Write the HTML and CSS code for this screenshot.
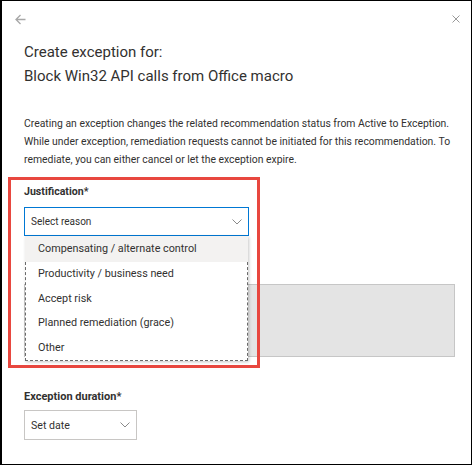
FILE: index.html
```html
<!DOCTYPE html>
<html>
<head>
<meta charset="utf-8">
<link rel="stylesheet" href="styles.css">
</head>
<body>
<div class="window">
  <div class="topbar">
    <svg class="icon-back" width="11" height="11" viewBox="0 0 11 11"><path d="M10.5 5.5H1.2M5.5 1L1 5.5L5.5 10" fill="none" stroke="#a8a8a8" stroke-width="1.3"/></svg>
    <svg class="icon-close" width="8" height="8" viewBox="0 0 8 8"><path d="M0.5 0.5L7.5 7.5M7.5 0.5L0.5 7.5" fill="none" stroke="#9a9a9a" stroke-width="1"/></svg>
  </div>
  <h1 class="title">Create exception for:<br>Block Win32 API calls from Office macro</h1>
  <p class="desc">Creating an exception changes the related recommendation status from Active to Exception.<br>While under exception, remediation requests cannot be initiated for this recommendation. To<br>remediate, you can either cancel or let the exception expire.</p>

  <div class="field">
    <div class="label">Justification*</div>
    <div class="select select-active">
      <span>Select reason</span>
      <svg class="chev" width="10" height="6" viewBox="0 0 10 6"><path d="M0.5 0.5L5 5L9.5 0.5" fill="none" stroke="#8a8a8a" stroke-width="1"/></svg>
    </div>
  </div>

  <div class="textarea"></div>

  <div class="field field-duration">
    <div class="label label-duration">Exception duration*</div>
    <div class="select select-small">
      <span>Set date</span>
      <svg class="chev" width="10" height="6" viewBox="0 0 10 6"><path d="M0.5 0.5L5 5L9.5 0.5" fill="none" stroke="#8a8a8a" stroke-width="1"/></svg>
    </div>
  </div>

  <div class="dropdown">
    <div class="item item-hover">Compensating / alternate control</div>
    <div class="rest">
      <div class="item">Productivity / business need</div>
      <div class="item">Accept risk</div>
      <div class="item">Planned remediation (grace)</div>
      <div class="item">Other</div>
    </div>
  </div>

  <div class="highlight"></div>
</div>
</body>
</html>
```

FILE: styles.css
```css
* { box-sizing: border-box; }
html, body { margin: 0; padding: 0; background: #fff; }
body { font-family: Roboto, "Open Sans", sans-serif; color: #323130; }

.window {
  position: relative;
  width: 472px;
  height: 465px;
  border: 1px solid #000;
  border-left-width: 2px;
  padding: 0 16px 0 22px;
  overflow: hidden;
}

.topbar {
  display: flex;
  justify-content: space-between;
  align-items: flex-start;
  margin: 0 -5px 0 -9px;
  padding-top: 13px;
  height: 24px;
}
.icon-back { display: block; }
.icon-close { display: block; margin-top: 1px; }

.title {
  margin: 15px 0 0;
  font-size: 15px;
  line-height: 24px;
  font-weight: 400;
  color: #323130;
}

.desc {
  margin: 27px 0 0;
  font-size: 10.4px;
  line-height: 18px;
  color: #323130;
  white-space: nowrap;
}

.field { margin-top: 15px; }
.label {
  font-size: 10.6px;
  line-height: 16px;
  font-weight: 700;
  color: #323130;
}
.label-duration { font-size: 11px; }

.select {
  display: flex;
  align-items: center;
  justify-content: space-between;
  height: 29px;
  margin-top: 7px;
  padding: 0 6px;
  font-size: 10px;
  border: 1px solid #c8c6c4;
}
.select-active { width: 225px; border-color: #0078d4; }
.select-small { width: 113px; height: 30px; margin-top: 5px; font-size: 10.6px; }
.chev { display: block; }

.textarea {
  margin-top: 48px;
  height: 73px;
  background: #e4e4e4;
  border: 1px solid #c6c6c6;
}

.field-duration { margin-top: 32px; }

.dropdown {
  position: absolute;
  left: 23px;
  top: 235px;
  width: 223px;
  background: #fff;
  box-shadow: 1px 1px 3px rgba(0,0,0,0.22);
}
.item {
  height: 24.5px;
  line-height: 24.5px;
  padding-left: 12px;
  font-size: 10.8px;
  color: #323130;
}
.item-hover { background: #f3f2f1; height: 26px; line-height: 26px; padding-left: 13px; }
.rest {
  border: 1px dashed #6b6b6b;
  border-top: none;
}

.highlight {
  position: absolute;
  left: 6px;
  top: 176px;
  width: 252px;
  height: 191px;
  border: 3px solid #e8473f;
}
```
